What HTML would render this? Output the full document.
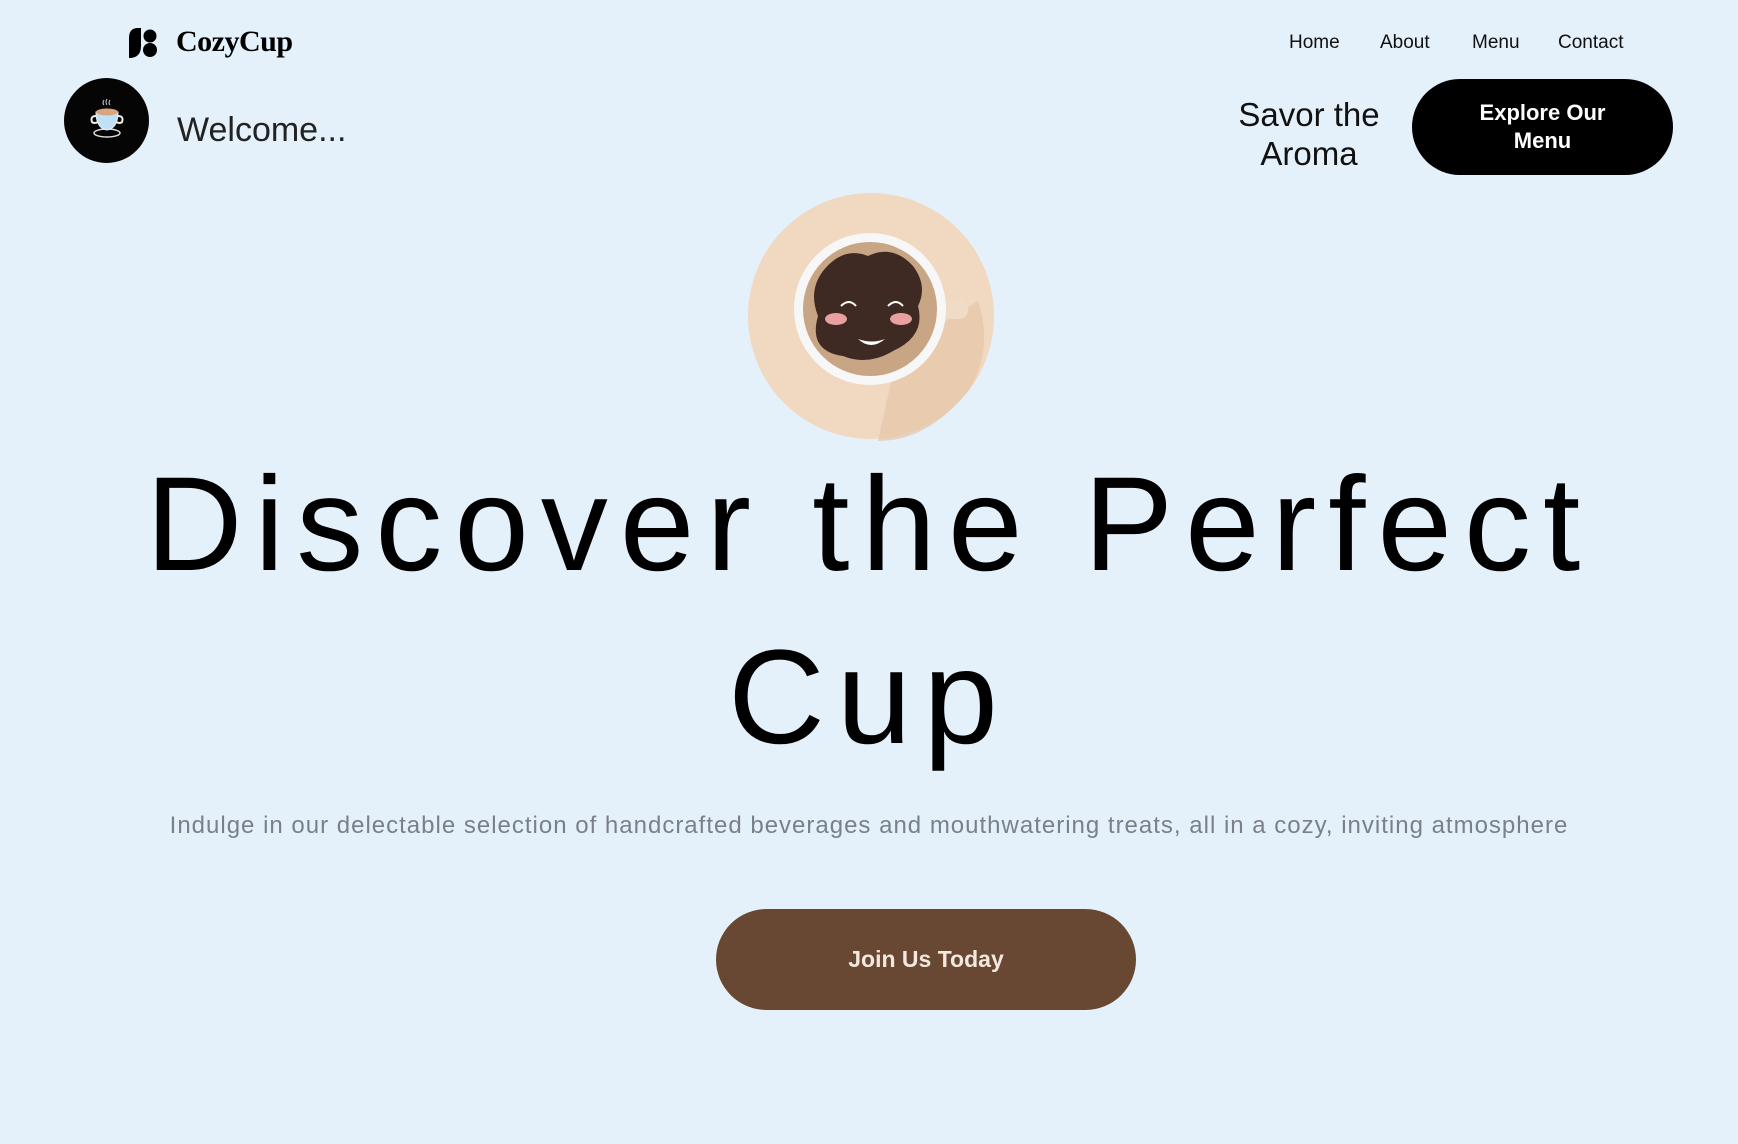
<!DOCTYPE html>
<html><head><meta charset="utf-8"><style>
*{margin:0;padding:0;box-sizing:border-box}
body{width:1738px;height:1144px;background:#e4f1fa;font-family:"Liberation Sans",sans-serif;position:relative;overflow:hidden;color:#000}
.a{position:absolute}
.nav a{position:absolute;top:32px;font-size:19px;color:#111;text-decoration:none}
</style></head><body>
<svg class="a" style="left:127px;top:28px" width="30" height="30" viewBox="0 0 30 30">
<path d="M2 30 L2 10 Q2 0 11 0 L14 0 L14 18 Q14 30 2 30Z" fill="#000"/>
<circle cx="23" cy="8" r="6.5" fill="#000"/><circle cx="23" cy="22" r="7" fill="#000"/></svg>
<div class="a" style="left:176px;top:25px;font-family:'Liberation Serif',serif;font-weight:bold;font-size:30px;letter-spacing:-0.5px">CozyCup</div>
<div class="nav"><a style="left:1289px">Home</a><a style="left:1380px">About</a><a style="left:1472px">Menu</a><a style="left:1558px">Contact</a></div>
<div class="a" style="left:64px;top:78px;width:85px;height:85px;border-radius:50%;background:#050505"></div>
<svg class="a" style="left:84px;top:96px" width="46" height="46" viewBox="0 0 46 46">
<path d="M20 4q-2 3 0 5M23 3q-2 3 0 6M26 4q-2 3 0 5" stroke="#ccc" fill="none"/>
<ellipse cx="23" cy="37" rx="13" ry="4" fill="none" stroke="#ddd" stroke-width="1.5"/>
<path d="M12 16 h22 q0 16 -11 18 q-11 -2 -11 -18z" fill="#bfe0f5" stroke="#eee"/>
<ellipse cx="23" cy="16" rx="11" ry="3.5" fill="#d9a57e"/>
<path d="M12 20q-6 0 -4 6 q2 2 6 0M34 20q6 0 4 6 q-2 2 -6 0" stroke="#eee" stroke-width="2" fill="none"/></svg>
<div class="a" style="left:177px;top:111px;font-size:34px;color:#222">Welcome...</div>
<div class="a" style="left:1209px;top:95px;width:200px;text-align:center;font-size:33px;line-height:39px;color:#111">Savor the<br>Aroma</div>
<div class="a" style="left:1412px;top:79px;width:261px;height:96px;border-radius:48px;background:#000;color:#fff;font-weight:bold;font-size:22px;line-height:28px;text-align:center;padding-top:20px">Explore Our<br>Menu</div>
<svg class="a" style="left:748px;top:191px" width="246" height="252" viewBox="0 0 246 252">
<circle cx="123" cy="125" r="123" fill="#f1d8c0"/>
<path d="M150 160 L230 110 Q246 160 220 200 Q180 250 130 250Z" fill="#e6c6a9" opacity=".7"/>
<rect x="190" y="108" width="30" height="20" rx="9" fill="#f0dcc6"/>
<circle cx="122" cy="118" r="76" fill="#f7f7f7"/>
<circle cx="122" cy="118" r="67" fill="#c8a585"/>
<path d="M75 80 q20 -25 45 -15 q25 -12 45 10 q15 20 5 40 q8 30 -25 45 q-25 15 -50 5 q-35 -5 -25 -40 q-10 -25 5 -45z" fill="#3e2a22"/>
<ellipse cx="88" cy="128" rx="11" ry="6" fill="#e8a0a0"/><ellipse cx="153" cy="128" rx="11" ry="6" fill="#e8a0a0"/>
<path d="M93 115q8 -8 15 0M140 115q8 -8 15 0" stroke="#fff" stroke-width="2" fill="none"/>
<path d="M110 148 q13 12 27 0 q-13 5 -27 0z" fill="#fff"/></svg>
<div class="a" style="left:0;width:1738px;top:438px;text-align:center;font-size:134px;line-height:173px;letter-spacing:12px;color:#000">Discover the Perfect<br>Cup</div>
<div class="a" style="left:0;width:1738px;top:812px;text-align:center;font-size:24px;letter-spacing:1px;color:#7b8088">Indulge in our delectable selection of handcrafted beverages and mouthwatering treats, all in a cozy, inviting atmosphere</div>
<div class="a" style="left:716px;top:909px;width:420px;height:101px;border-radius:51px;background:#684832;color:#f3e8de;font-size:23px;font-weight:bold;text-align:center;line-height:101px">Join Us Today</div>
</body></html>
